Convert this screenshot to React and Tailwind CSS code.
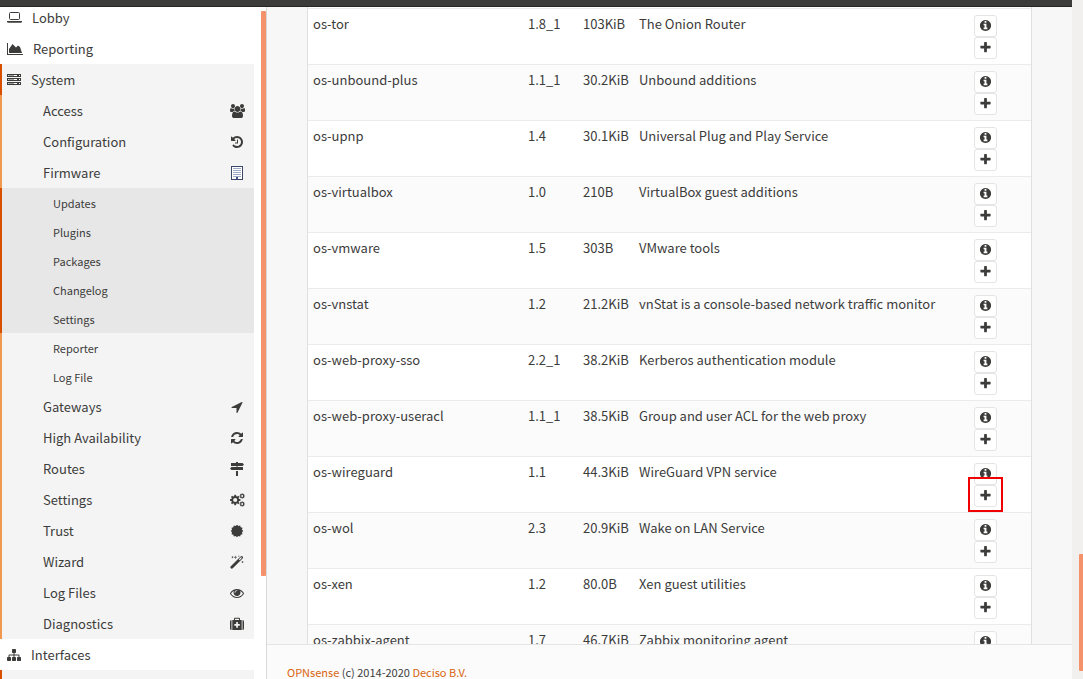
import React from "react";

function Glyph({ d, className = "size-[14px]", box = "0 0 1792 1792" }) {
  return (
    <svg viewBox={box} className={className} fill="currentColor" aria-hidden="true">
      <path d={d} />
    </svg>
  );
}

const PLUS =
  "M1600 736v192q0 40-28 68t-68 28h-416v416q0 40-28 68t-68 28h-192q-40 0-68-28t-28-68v-416h-416q-40 0-68-28t-28-68v-192q0-40 28-68t68-28h416v-416q0-40 28-68t68-28h192q40 0 68 28t28 68v416h416q40 0 68 28t28 68z";
const INFO =
  "M1152 1376v-160q0-14-9-23t-23-9h-96v-512q0-14-9-23t-23-9h-320q-14 0-23 9t-9 23v160q0 14 9 23t23 9h96v320h-96q-14 0-23 9t-9 23v160q0 14 9 23t23 9h448q14 0 23-9t9-23zm-128-896v-160q0-14-9-23t-23-9h-192q-14 0-23 9t-9 23v160q0 14 9 23t23 9h192q14 0 23-9t9-23zm640 416q0 209-103 385.5t-279.5 279.5-385.5 103-385.5-103-279.5-279.5-103-385.5 103-385.5 279.5-279.5 385.5-103 385.5 103 279.5 279.5 103 385.5z";
const REFRESH =
  "M1639 1056q0 5-1 7-64 268-268 434.5t-478 166.5q-146 0-282.5-55t-243.5-157l-129 129q-19 19-45 19t-45-19-19-45v-448q0-26 19-45t45-19h448q26 0 45 19t19 45-19 45l-137 137q71 66 161 102t187 36q134 0 250-65t186-179q11-17 53-117 8-23 30-23h192q13 0 22.5 9.5t9.5 22.5zm25-800v448q0 26-19 45t-45 19h-448q-26 0-45-19t-19-45 19-45l138-138q-148-137-349-137-134 0-250 65t-186 179q-11 17-53 117-8 23-30 23h-199q-13 0-22.5-9.5t-9.5-22.5v-7q65-268 270-434.5t480-166.5q146 0 284 55.5t245 156.5l130-129q19-19 45-19t45 19 19 45z";
const HISTORY =
  "M1664 896q0 156-61 298t-164 245-245 164-298 61q-172 0-327-72.5t-264-204.5q-7-10-6.5-22.5t8.5-20.5l137-138q10-9 25-9 16 2 23 12 73 95 179 147t225 52q104 0 198.5-40.5t163.5-109.5 109.5-163.5 40.5-198.5-40.5-198.5-109.5-163.5-163.5-109.5-198.5-40.5q-98 0-188 35.5t-160 101.5l137 138q31 30 14 69-17 40-59 40h-448q-26 0-45-19t-19-45v-448q0-42 40-59 39-17 69 14l130 129q107-101 244.5-156.5t284.5-55.5q156 0 298 61t245 164 164 245 61 298zm-640-288v448q0 14-9 23t-23 9h-320q-14 0-23-9t-9-23v-64q0-14 9-23t23-9h224v-352q0-14 9-23t23-9h64q14 0 23 9t9 23z";
const SITEMAP =
  "M1792 1248v320q0 40-28 68t-68 28h-320q-40 0-68-28t-28-68v-320q0-40 28-68t68-28h96v-192h-512v192h96q40 0 68 28t28 68v320q0 40-28 68t-68 28h-320q-40 0-68-28t-28-68v-320q0-40 28-68t68-28h96v-192h-512v192h96q40 0 68 28t28 68v320q0 40-28 68t-68 28h-320q-40 0-68-28t-28-68v-320q0-40 28-68t68-28h96v-192q0-52 38-90t90-38h512v-192h-96q-40 0-68-28t-28-68v-320q0-40 28-68t68-28h320q40 0 68 28t28 68v320q0 40-28 68t-68 28h-96v192h512q52 0 90 38t38 90v192h96q40 0 68 28t28 68z";
const ARROW =
  "M1593 349l-640 1280q-17 35-57 35-5 0-15-2-22-5-35.5-22.5t-13.5-39.5v-576h-576q-22 0-39.5-13.5t-22.5-35.5 4-42 29-30l1280-640q13-7 29-7 27 0 45 19 15 14 18.5 34.5t-6.5 39.5z";
const EYE =
  "M1664 960q-152-236-381-353 61 104 61 225 0 185-131.5 316.5t-316.5 131.5-316.5-131.5-131.5-316.5q0-121 61-225-229 117-381 353 133 205 333.5 326.5t434.5 121.5 434.5-121.5 333.5-326.5zm-720-384q0-20-14-34t-34-14q-125 0-214.5 89.5t-89.5 214.5q0 20 14 34t34 14 34-14 14-34q0-86 61-147t147-61q20 0 34-14t14-34zm848 384q0 34-20 69-140 230-376.5 368.5t-499.5 138.5-499.5-139-376.5-368q-20-35-20-69t20-69q140-229 376.5-368t499.5-139 499.5 139 376.5 368q20 35 20 69z";
const USERS =
  "M593 896q-162 5-265 128h-134q-82 0-138-40.5t-56-118.5q0-353 124-353 6 0 43.5 21t97.5 42.5 119 21.5q67 0 133-23-5 37-5 66 0 159 93 256zm1071 637q0 120-73 189.5t-194 69.5h-874q-121 0-194-69.5t-73-189.5q0-53 3.5-103.5t14-109 26.5-108.5 43-97.5 62-81 85.5-53.5 111.5-20q10 0 43 21.5t73 48 107 48 135 21.5 135-21.5 107-48 73-48 43-21.5q61 0 111.5 20t85.5 53.5 62 81 43 97.5 26.5 108.5 14 109 3.5 103.5zm-1024-1277q0 106-75 181t-181 75-181-75-75-181 75-181 181-75 181 75 75 181zm704 384q0 159-112.5 271.5t-271.5 112.5-271.5-112.5-112.5-271.5 112.5-271.5 271.5-112.5 271.5 112.5 112.5 271.5zm576 225q0 78-56 118.5t-138 40.5h-134q-103-123-265-128 93-97 93-256 0-29-5-66 66 23 133 23 59 0 119-21.5t97.5-42.5 43.5-21q124 0 124 353zm-128-609q0 106-75 181t-181 75-181-75-75-181 75-181 181-75 181 75 75 181z";

function Laptop() {
  return (
    <svg viewBox="0 0 15 14" className="h-[14px] w-[15px]" aria-hidden="true">
      <rect x="2.5" y="1.5" width="10" height="7" rx="1" fill="none" stroke="currentColor" />
      <path d="M0 10h15v.8q0 .9-1.2.9H1.2Q0 11.700 0 10.8z" fill="currentColor" />
    </svg>
  );
}

function AreaChart() {
  return (
    <svg viewBox="0 0 16 14" className="h-[14px] w-[16px]" fill="currentColor" aria-hidden="true">
      <path d="M0 1h1v11h15v1H0z" />
      <path d="M2 11V7l3.500-5L9 5.500l2-2 2 1.500 2 6z" />
    </svg>
  );
}

function Server() {
  return (
    <svg viewBox="0 0 14 14" className="size-[14px]" aria-hidden="true">
      {[1, 5, 9].map((y) => (
        <g key={y}>
          <rect x=".5" y={y + 0.5} width="13" height="2" fill="#fff" stroke="currentColor" />
          <path d={`M1.500 ${y + 1.5}h5.500`} stroke="currentColor" strokeWidth=".5" />
          <rect x="10" y={y + 1} width="2" height="1" fill="currentColor" />
        </g>
      ))}
    </svg>
  );
}

function Building() {
  const cols = [2.5, 4.5, 6.5, 8.5];
  const rows = [2, 4, 6, 8, 10];
  return (
    <svg viewBox="0 0 12 14" className="h-[14px] w-[12px]" aria-hidden="true">
      <rect x=".5" y=".5" width="11" height="13" fill="#fff" stroke="#3c4668" />
      {rows.map((y) =>
        cols.map((x) => <rect key={`${x}-${y}`} x={x} y={y} width="1" height="1" fill="#40528c" />)
      )}
      <rect x="5" y="11" width="2" height="2" fill="#40528c" />
    </svg>
  );
}

function Gear({ cx, cy, r, ring, teeth, reach }) {
  const spokes = Array.from({ length: teeth }, (_, i) => (i * 360) / teeth);
  return (
    <g transform={`translate(${cx} ${cy})`} stroke="currentColor" fill="none">
      <circle r={r} strokeWidth={ring} />
      {spokes.map((a) => (
        <path key={a} d={`M0 ${-r}V${-reach}`} strokeWidth={ring} transform={`rotate(${a})`} />
      ))}
    </g>
  );
}

function Cogs() {
  return (
    <svg viewBox="0 0 15 14" className="h-[14px] w-[15px]" aria-hidden="true">
      <Gear cx={5.2} cy={7} r={3} ring={1.9} teeth={8} reach={5.2} />
      <Gear cx={12.2} cy={3} r={1.5} ring={1} teeth={8} reach={2.6} />
      <Gear cx={12.2} cy={11} r={1.5} ring={1} teeth={8} reach={2.6} />
    </svg>
  );
}

function MapSigns() {
  return (
    <svg viewBox="0 0 14 14" className="size-[14px]" fill="currentColor" aria-hidden="true">
      <path d="M6 0h2v1h4.500l1.500 1.500L12.500 4H1V1h5zM6 4.500h2V5h5v3H1.500L0 6.500 1.500 5H6zM6 9h2v5H6z" />
    </svg>
  );
}

function Certificate() {
  const points = Array.from({ length: 24 }, (_, i) => {
    const angle = (i * Math.PI) / 12;
    const radius = i % 2 ? 5.2 : 6.3;
    return `${(7 + radius * Math.sin(angle)).toFixed(2)},${(7 - radius * Math.cos(angle)).toFixed(2)}`;
  }).join(" ");
  return (
    <svg viewBox="0 0 14 14" className="size-[14px]" fill="currentColor" aria-hidden="true">
      <polygon points={points} />
    </svg>
  );
}

function Wand() {
  return (
    <svg viewBox="0 0 14 14" className="size-[14px]" aria-hidden="true">
      <path d="M1.800 12.200L11.600 2.400" stroke="currentColor" strokeWidth="2.800" strokeLinecap="round" />
      <path d="M9.200 4.800L11.500 2.500" stroke="#f4f4f4" strokeWidth="1.100" />
      <path
        d="M2.500 1.200v2M1.500 2.200h2M5.500 .8v3M4 2.300h3M8.800 .5v1.500M12.500 6v2M11.500 7h2"
        stroke="currentColor"
        strokeWidth=".6"
      />
    </svg>
  );
}

function Medkit() {
  return (
    <svg viewBox="0 0 14 14" className="size-[14px]" fill="currentColor" aria-hidden="true">
      <path d="M1.500 3v10Q0 13 0 11.500v-7Q0 3 1.500 3zM12.500 3Q14 3 14 4.500v7q0 1.500-1.500 1.500z" />
      <path
        fillRule="evenodd"
        d="M2.300 3H4V1.700Q4 .8 4.900 .8h4.200q.9 0 .9.900V3h1.700v10H2.300zM5 3h4V1.800H5zM6.200 5v2H4.300v1.800h1.900v2h1.700v-2h1.900V7H7.900V5z"
      />
    </svg>
  );
}

function TopItem({ icon, label, active = false }) {
  return (
    <a
      href="#"
      className={`flex h-[31px] items-center gap-[10px] border-l-2 pl-[5px] ${
        active ? "border-[#d94f00] bg-[#f4f4f4]" : "border-transparent"
      }`}
    >
      {icon}
      <span>{label}</span>
    </a>
  );
}

function SubItem({ icon, label }) {
  return (
    <a href="#" className="flex h-[31px] items-center justify-between border-l-2 border-[#f0984e] bg-[#f4f4f4] pl-[41px] pr-2">
      <span>{label}</span>
      <span className="flex w-[18px] justify-center">{icon}</span>
    </a>
  );
}

function LeafItem({ label }) {
  return (
    <a href="#" className="flex h-[29px] items-center pl-[51px] text-[11px]">
      {label}
    </a>
  );
}

const packages = [
  ["os-tor", "1.8_1", "103KiB", "The Onion Router"],
  ["os-unbound-plus", "1.1_1", "30.2KiB", "Unbound additions"],
  ["os-upnp", "1.4", "30.1KiB", "Universal Plug and Play Service"],
  ["os-virtualbox", "1.0", "210B", "VirtualBox guest additions"],
  ["os-vmware", "1.5", "303B", "VMware tools"],
  ["os-vnstat", "1.2", "21.2KiB", "vnStat is a console-based network traffic monitor"],
  ["os-web-proxy-sso", "2.2_1", "38.2KiB", "Kerberos authentication module"],
  ["os-web-proxy-useracl", "1.1_1", "38.5KiB", "Group and user ACL for the web proxy"],
  ["os-wireguard", "1.1", "44.3KiB", "WireGuard VPN service"],
  ["os-wol", "2.3", "20.9KiB", "Wake on LAN Service"],
  ["os-xen", "1.2", "80.0B", "Xen guest utilities"],
  ["os-zabbix-agent", "1.7", "46.7KiB", "Zabbix monitoring agent"],
];

function IconButton({ label, d }) {
  return (
    <button
      type="button"
      aria-label={label}
      className="flex h-[22px] w-[23px] items-center justify-center rounded-[3px] border border-[#e5e5e5] bg-white pb-px"
    >
      <Glyph d={d} className="size-[13px]" />
    </button>
  );
}

function PackageRow({ pkg, striped }) {
  const [name, version, size, comment] = pkg;
  return (
    <tr className={`h-[56px] border-t border-[#ebebeb] align-top ${striped ? "bg-[#fbfbfb]" : "bg-white"}`}>
      <td className="pl-[5px] pt-[5px]">{name}</td>
      <td className="pl-[5px] pt-[5px]">{version}</td>
      <td className="pl-[5px] pt-[5px]">{size}</td>
      <td className="pl-[5px] pt-[5px]">{comment}</td>
      <td className="pl-[5px] pt-[6px]">
        <IconButton label={`Information on ${name}`} d={INFO} />
        <div className="relative w-fit">
          <IconButton label={`Install ${name}`} d={PLUS} />
          {name === "os-wireguard" && (
            <span className="pointer-events-none absolute -left-[6px] -top-[8px] size-[35px] border-2 border-[#f00000]" />
          )}
        </div>
      </td>
    </tr>
  );
}

export default function App() {
  return (
    <div className="flex h-screen overflow-hidden bg-[#f1f0ef] font-['Noto_Sans_CJK_SC','Noto_Sans',sans-serif] text-[13px] leading-5 text-[#3c3c3b]">
      <div className="flex min-w-0 flex-1 flex-col">
        <header className="h-[7px] shrink-0 border-b border-[#262625] bg-[#3c3c3b]" />
        <div className="flex min-h-0 flex-1">
          <aside className="flex w-[267px] shrink-0 justify-between overflow-hidden border-r border-[#d9d9d9] bg-white">
            <nav className="-mt-[5px] w-[254px]">
              <TopItem icon={<Laptop />} label="Lobby" />
              <TopItem icon={<AreaChart />} label="Reporting" />
              <TopItem icon={<Server />} label="System" active />
              <SubItem icon={<Glyph d={USERS} box="0 0 1920 1792" className="h-[14px] w-[15px]" />} label="Access" />
              <SubItem icon={<Glyph d={HISTORY} />} label="Configuration" />
              <SubItem icon={<Building />} label="Firmware" />
              <div className="border-l-2 border-[#d94f00] bg-[#e7e7e7]">
                <LeafItem label="Updates" />
                <LeafItem label="Plugins" />
                <LeafItem label="Packages" />
                <LeafItem label="Changelog" />
                <LeafItem label="Settings" />
              </div>
              <div className="border-l-2 border-[#f0984e] bg-[#f4f4f4]">
                <LeafItem label="Reporter" />
                <LeafItem label="Log File" />
              </div>
              <SubItem icon={<Glyph d={ARROW} />} label="Gateways" />
              <SubItem icon={<Glyph d={REFRESH} />} label="High Availability" />
              <SubItem icon={<MapSigns />} label="Routes" />
              <SubItem icon={<Cogs />} label="Settings" />
              <SubItem icon={<Certificate />} label="Trust" />
              <SubItem icon={<Wand />} label="Wizard" />
              <SubItem icon={<Glyph d={EYE} />} label="Log Files" />
              <SubItem icon={<Medkit />} label="Diagnostics" />
              <TopItem icon={<Glyph d={SITEMAP} />} label="Interfaces" />
              <div className="h-[31px] border-l-2 border-[#d94f00] bg-[#f4f4f4]" />
            </nav>
            <div className="mt-1 h-[565px] w-[5px] rounded-[1px] bg-[#f4926b]" />
          </aside>
          <div className="flex min-w-0 flex-1 flex-col">
            <main className="min-h-0 flex-1 overflow-hidden bg-[#f7f7f7] px-10">
              <div className="border-x border-[#e0e0e0] bg-white pt-px">
                <table className="w-full table-fixed border-collapse">
                  <colgroup>
                    <col className="w-[215px]" />
                    <col className="w-[55px]" />
                    <col className="w-[56px]" />
                    <col />
                    <col className="w-[62px]" />
                  </colgroup>
                  <tbody>
                    {packages.map((pkg, i) => (
                      <PackageRow key={pkg[0]} pkg={pkg} striped={i % 2 === 1} />
                    ))}
                  </tbody>
                </table>
              </div>
            </main>
            <footer className="h-[35px] shrink-0 overflow-hidden border-t border-[#e5e5e5] bg-[#fbfbfb] pl-5 pt-[17px] text-[11px]">
              <a href="#" className="text-[#d9630f]">OPNsense</a> (c) 2014-2020{" "}
              <a href="#" className="text-[#d9630f]">Deciso B.V.</a>
            </footer>
          </div>
        </div>
      </div>
      <div className="flex w-[11px] shrink-0 justify-end pt-[554px]">
        <div className="h-[117px] w-1 rounded-l-[1px] bg-[#f4926b]" />
      </div>
    </div>
  );
}
